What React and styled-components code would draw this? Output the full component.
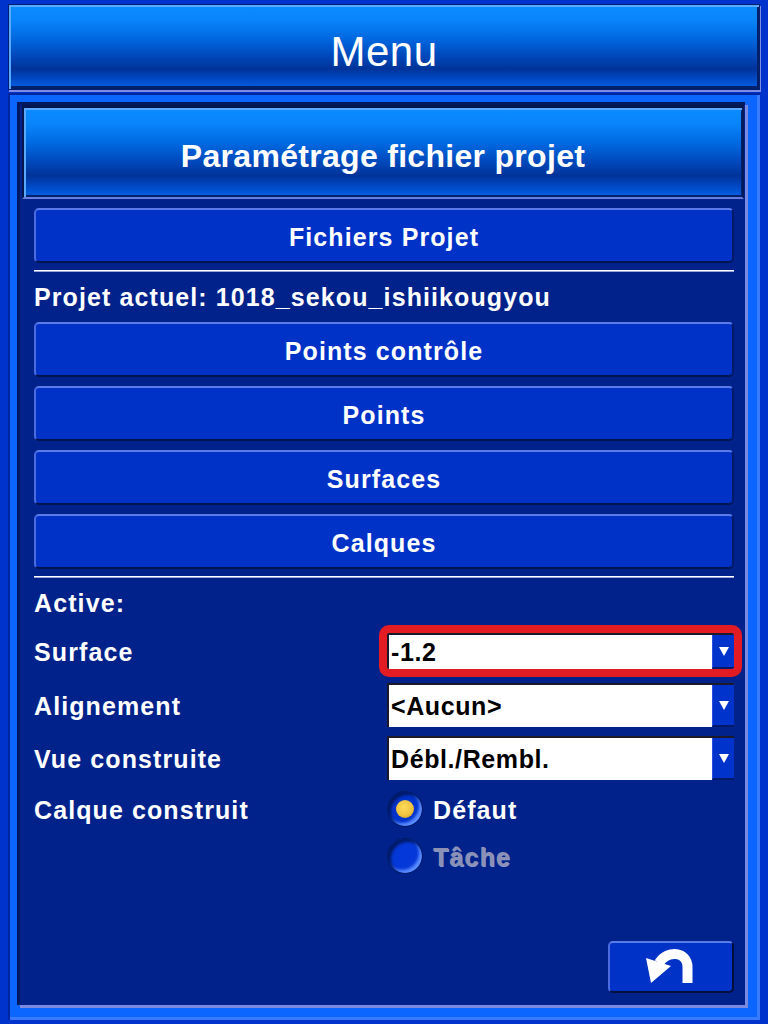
import React from 'react';
import styled, { createGlobalStyle } from 'styled-components';

const GlobalStyle = createGlobalStyle`
  html, body {
    margin: 0;
    padding: 0;
    background: #0033cc;
  }
  body {
    font-family: "Liberation Sans", Arial, sans-serif;
  }
`;

const Screen = styled.div`
  width: 768px;
  height: 1024px;
  box-sizing: border-box;
  padding: 4px 8px 4px 8px;
  display: flex;
  flex-direction: column;
  background: #0033cc;
`;

const glossy = `
  background: linear-gradient(
    to bottom,
    #0a8cff 0%,
    #0a84fa 18%,
    #0068e0 40%,
    #0046b8 62%,
    #003399 76%,
    #0048c4 88%,
    #0062e6 100%
  );
`;

const Header = styled.div`
  height: 86px;
  box-sizing: border-box;
  padding-top: 9px;
  ${glossy}
  border: 1px solid #001f70;
  box-shadow: inset 2px 2px 0 #5aa8ff, inset -2px -3px 0 #00206a, 1px 2px 0 #7d8de6;
  display: flex;
  align-items: center;
  justify-content: center;
  color: #ffffff;
  font-size: 42px;
  letter-spacing: 0.5px;
`;

const Frame = styled.div`
  flex: 1;
  margin-top: 3px;
  display: flex;
  box-sizing: border-box;
  padding: 12px 12px 12px 12px;
  background: #0a66ff;
  box-shadow: inset 2px 2px 0 #0026a0, inset -3px -3px 0 #3a7cff;
`;

const Panel = styled.div`
  flex: 1;
  display: flex;
  flex-direction: column;
  box-sizing: border-box;
  background: #00228a;
  border-right: 3px solid #7a8ae0;
  border-bottom: 3px solid #7a8ae0;
  box-shadow: -3px -3px 0 #001860;
`;

const TitleBar = styled.div`
  height: 94px;
  margin: 0 1px 0 2px;
  box-sizing: border-box;
  padding-top: 7px;
  ${glossy}
  border-top: 3px solid #00164d;
  border-left: 2px solid #00164d;
  border-right: 2px solid #001a5a;
  border-bottom: 2px solid #6a7ee0;
  box-shadow: inset 2px 2px 0 #5aa8ff, inset -1px -2px 0 #00206a;
  display: flex;
  align-items: center;
  justify-content: center;
  color: #ffffff;
  font-size: 32px;
  font-weight: bold;
  letter-spacing: 0.3px;
`;

const Content = styled.div`
  flex: 1;
  display: flex;
  flex-direction: column;
  padding: 0 11px 12px 14px;
`;

const PanelButton = styled.div`
  height: 55px;
  margin-top: ${(p) => p.$gap || 0}px;
  box-sizing: border-box;
  padding-top: 3px;
  display: flex;
  align-items: center;
  justify-content: center;
  background: #0032c8;
  border-radius: 5px;
  border-top: 2px solid #5a7ce8;
  border-left: 2px solid #4a6ce0;
  border-right: 2px solid #001a66;
  border-bottom: 2px solid #001450;
  color: #ffffff;
  font-size: 25px;
  font-weight: bold;
  letter-spacing: 1.1px;
  cursor: pointer;
`;

const Divider = styled.div`
  height: 2px;
  margin-top: 7px;
  background: #ffffff;
  border-bottom: 1px solid #9aa6d8;
  box-sizing: border-box;
`;

const InfoLine = styled.div`
  height: ${(p) => p.$h}px;
  display: flex;
  align-items: center;
  color: #ffffff;
  font-size: 25px;
  font-weight: bold;
  letter-spacing: 1.1px;
`;

const Row = styled.div`
  height: ${(p) => p.$h}px;
  margin-top: ${(p) => p.$gap || 0}px;
  display: flex;
  align-items: center;
`;

const Label = styled.div`
  width: 353px;
  flex-shrink: 0;
  padding-top: 3px;
  color: #ffffff;
  font-size: 25px;
  font-weight: bold;
  letter-spacing: 1.1px;
`;

const Select = styled.div`
  width: 347px;
  height: ${(p) => p.$h}px;
  box-sizing: border-box;
  display: flex;
  background: #ffffff;
  border-top: 2px solid #1a1a2a;
  border-left: 2px solid #1a1a2a;
  outline: ${(p) => (p.$focused ? '8px solid #e31c24' : 'none')};
  border-radius: ${(p) => (p.$focused ? '2px' : '0')};
`;

const SelectValue = styled.div`
  flex: 1;
  display: flex;
  align-items: center;
  padding-left: 2px;
  color: #000000;
  font-size: 25px;
  font-weight: bold;
  letter-spacing: 0.6px;
  white-space: nowrap;
  overflow: hidden;
`;

const SelectArrow = styled.div`
  width: 22px;
  flex-shrink: 0;
  display: flex;
  align-items: center;
  justify-content: center;
  background: #0033cc;
  box-sizing: border-box;
  border-left: 1px solid #2a4ee0;
  border-bottom: 2px solid #001a66;
`;

const RadioRow = styled.div`
  height: 36px;
  margin-top: ${(p) => p.$gap || 0}px;
  display: flex;
  align-items: center;
`;

const RadioSpacer = styled.div`
  width: 353px;
  flex-shrink: 0;
  padding-top: 3px;
  color: #ffffff;
  font-size: 25px;
  font-weight: bold;
  letter-spacing: 1.1px;
`;

const RadioCircle = styled.span`
  width: 36px;
  height: 36px;
  box-sizing: border-box;
  border-radius: 50%;
  display: flex;
  align-items: center;
  justify-content: center;
  background: ${(p) => (p.$disabled ? '#0538d8' : '#0033cc')};
  border: 1px solid #001a5e;
  box-shadow: inset 3px 3px 3px #001a66, inset -3px -3px 3px #5a8cff;
`;

const RadioDot = styled.span`
  width: 18px;
  height: 18px;
  border-radius: 50%;
  background: radial-gradient(circle at 45% 40%, #ffd95a 0%, #f0c340 55%, #b88a22 100%);
`;

const RadioText = styled.span`
  margin-left: 10px;
  padding-top: 3px;
  font-size: 25px;
  font-weight: bold;
  letter-spacing: 1.1px;
  color: ${(p) => (p.$disabled ? '#8c90b4' : '#ffffff')};
  text-shadow: ${(p) => (p.$disabled ? '1px 1px 0 rgba(255,255,255,0.55)' : 'none')};
`;

const Spacer = styled.div`
  flex: 1;
`;

const Footer = styled.div`
  display: flex;
  justify-content: flex-end;
`;

const BackButton = styled.div`
  width: 126px;
  height: 52px;
  box-sizing: border-box;
  display: flex;
  align-items: center;
  justify-content: center;
  background: #0032c8;
  border-radius: 5px;
  border-top: 2px solid #5a7ce8;
  border-left: 2px solid #4a6ce0;
  border-right: 2px solid #00103a;
  border-bottom: 2px solid #00103a;
  cursor: pointer;
`;

const DownArrow = () => (
  <svg width="10" height="9" viewBox="0 0 10 9">
    <polygon points="0,0 10,0 5,9" fill="#ffffff" />
  </svg>
);

const UndoIcon = () => (
  <svg width="50" height="40" viewBox="0 0 50 40">
    <path d="M41.5 36 V20 C41.5 5 22 2 13 16" fill="none" stroke="#ffffff" strokeWidth="10" />
    <polygon points="0,11 25,19 5,36" fill="#ffffff" />
  </svg>
);

const DropDown = ({ value, h, focused }) => (
  <Select $h={h} $focused={focused}>
    <SelectValue>{value}</SelectValue>
    <SelectArrow>
      <DownArrow />
    </SelectArrow>
  </Select>
);

const App = () => {
  return (
    <>
      <GlobalStyle />
      <Screen>
        <Header>Menu</Header>
        <Frame>
          <Panel>
            <TitleBar>Paramétrage fichier projet</TitleBar>
            <Content>
              <PanelButton $gap={9}>Fichiers Projet</PanelButton>
              <Divider />
              <InfoLine $h={50}>Projet actuel: 1018_sekou_ishiikougyou</InfoLine>
              <PanelButton>Points contrôle</PanelButton>
              <PanelButton $gap={9}>Points</PanelButton>
              <PanelButton $gap={9}>Surfaces</PanelButton>
              <PanelButton $gap={9}>Calques</PanelButton>
              <Divider />
              <InfoLine $h={51}>Active:</InfoLine>
              <Row $h={44}>
                <Label>Surface</Label>
                <DropDown value="-1.2" h={36} focused />
              </Row>
              <Row $h={44} $gap={10}>
                <Label>Alignement</Label>
                <DropDown value="<Aucun>" h={44} />
              </Row>
              <Row $h={44} $gap={9}>
                <Label>Vue construite</Label>
                <DropDown value="Débl./Rembl." h={44} />
              </Row>
              <RadioRow $gap={11}>
                <RadioSpacer>Calque construit</RadioSpacer>
                <RadioCircle>
                  <RadioDot />
                </RadioCircle>
                <RadioText>Défaut</RadioText>
              </RadioRow>
              <RadioRow $gap={11}>
                <RadioSpacer />
                <RadioCircle $disabled />
                <RadioText $disabled>Tâche</RadioText>
              </RadioRow>
              <Spacer />
              <Footer>
                <BackButton>
                  <UndoIcon />
                </BackButton>
              </Footer>
            </Content>
          </Panel>
        </Frame>
      </Screen>
    </>
  );
};

export default App;
